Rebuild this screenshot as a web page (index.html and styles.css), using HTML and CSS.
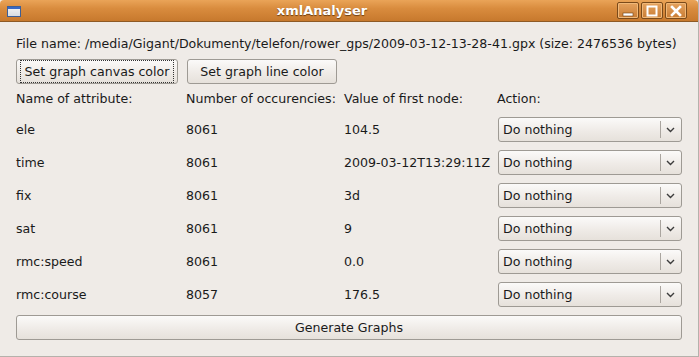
FILE: index.html
```html
<!DOCTYPE html>
<html lang="en">
<head>
  <meta charset="UTF-8">
  <title>xmlAnalyser</title>
  <link rel="stylesheet" href="styles.css">
</head>
<body>
  <div class="window">
    <div class="titlebar">
      <div class="win-icon"><div class="win-icon-bar"></div></div>
      <div class="title">xmlAnalyser</div>
      <div class="title-buttons">
        <div class="tbtn">
          <svg width="12" height="12" viewBox="0 0 12 12"><rect x="1" y="8" width="10" height="3" fill="#fff" stroke="#6b3f12" stroke-width="0.6"/></svg>
        </div>
        <div class="tbtn">
          <svg width="12" height="12" viewBox="0 0 12 12"><rect x="1.5" y="1.5" width="9" height="9" fill="none" stroke="#fff" stroke-width="2"/></svg>
        </div>
        <div class="tbtn">
          <svg width="12" height="12" viewBox="0 0 12 12"><path d="M2 2 L10 10 M10 2 L2 10" stroke="#fff" stroke-width="2.6" stroke-linecap="square"/></svg>
        </div>
      </div>
    </div>

    <div class="content">
      <p class="file-name">File name: /media/Gigant/Dokumenty/telefon/rower_gps/2009-03-12-13-28-41.gpx (size: 2476536 bytes)</p>

      <div class="color-buttons">
        <button class="btn focused canvas-btn"><span>Set graph canvas color</span></button>
        <button class="btn line-btn"><span>Set graph line color</span></button>
      </div>

      <div class="attr-table">
        <div class="head">Name of attribute:</div>
        <div class="head">Number of occurencies:</div>
        <div class="head">Value of first node:</div>
        <div class="head">Action:</div>

        <div class="cell">ele</div>
        <div class="cell">8061</div>
        <div class="cell">104.5</div>
        <div class="combo"><span>Do nothing</span><i class="sep"></i><svg class="arrow" width="9" height="6" viewBox="0 0 9 6"><path d="M1 1 L4.5 4.5 L8 1" fill="none" stroke="#3c3c3c" stroke-width="1.4"/></svg></div>

        <div class="cell">time</div>
        <div class="cell">8061</div>
        <div class="cell">2009-03-12T13:29:11Z</div>
        <div class="combo"><span>Do nothing</span><i class="sep"></i><svg class="arrow" width="9" height="6" viewBox="0 0 9 6"><path d="M1 1 L4.5 4.5 L8 1" fill="none" stroke="#3c3c3c" stroke-width="1.4"/></svg></div>

        <div class="cell">fix</div>
        <div class="cell">8061</div>
        <div class="cell">3d</div>
        <div class="combo"><span>Do nothing</span><i class="sep"></i><svg class="arrow" width="9" height="6" viewBox="0 0 9 6"><path d="M1 1 L4.5 4.5 L8 1" fill="none" stroke="#3c3c3c" stroke-width="1.4"/></svg></div>

        <div class="cell">sat</div>
        <div class="cell">8061</div>
        <div class="cell">9</div>
        <div class="combo"><span>Do nothing</span><i class="sep"></i><svg class="arrow" width="9" height="6" viewBox="0 0 9 6"><path d="M1 1 L4.5 4.5 L8 1" fill="none" stroke="#3c3c3c" stroke-width="1.4"/></svg></div>

        <div class="cell">rmc:speed</div>
        <div class="cell">8061</div>
        <div class="cell">0.0</div>
        <div class="combo"><span>Do nothing</span><i class="sep"></i><svg class="arrow" width="9" height="6" viewBox="0 0 9 6"><path d="M1 1 L4.5 4.5 L8 1" fill="none" stroke="#3c3c3c" stroke-width="1.4"/></svg></div>

        <div class="cell">rmc:course</div>
        <div class="cell">8057</div>
        <div class="cell">176.5</div>
        <div class="combo"><span>Do nothing</span><i class="sep"></i><svg class="arrow" width="9" height="6" viewBox="0 0 9 6"><path d="M1 1 L4.5 4.5 L8 1" fill="none" stroke="#3c3c3c" stroke-width="1.4"/></svg></div>
      </div>

      <button class="btn wide"><span>Generate Graphs</span></button>
    </div>
  </div>
</body>
</html>
```

FILE: styles.css
```css
* {
  margin: 0;
  padding: 0;
  box-sizing: border-box;
}

body {
  font-family: "DejaVu Sans", sans-serif;
  font-size: 12.6px;
  color: #1a1a1a;
  background-color: #efebe7;
}

.window {
  width: 699px;
  height: 357px;
  display: flex;
  flex-direction: column;
  background-color: #efebe7;
  border-right: 1px solid #b5b1ab;
  border-bottom: 1px solid #b5b1ab;
}

/* Title bar */
.titlebar {
  height: 22px;
  display: flex;
  align-items: center;
  padding: 0 7px;
  background: linear-gradient(#eaa458, #d98c3e 40%, #c7792d);
  border-bottom: 1px solid #8e5a25;
  border-radius: 4px 4px 0 0;
}

.win-icon {
  width: 14px;
  height: 11px;
  background: linear-gradient(#f4f4f4, #d8dde2);
  border: 1px solid #3e5f96;
  margin-top: 1px;
}

.win-icon-bar {
  height: 2px;
  background-color: #3868c4;
}

.title {
  flex: 1;
  text-align: center;
  color: #fff;
  font-weight: bold;
  font-size: 13px;
  text-shadow: 0 1px 1px #6b3d10;
  padding-left: 6px;
}

.title-buttons {
  display: flex;
  gap: 2px;
  margin-right: 4px;
}

.tbtn {
  width: 22px;
  height: 17px;
  border: 1px solid #7a4a1a;
  border-radius: 2px;
  background: linear-gradient(#e5a25e, #c97d34);
  box-shadow: inset 0 0 0 1px #f0b878;
  display: flex;
  justify-content: center;
  align-items: center;
}

/* Content */
.content {
  padding: 14px 16px 0 16px;
  display: flex;
  flex-direction: column;
}

.file-name {
  line-height: 16px;
  height: 16px;
  white-space: nowrap;
}

.color-buttons {
  display: flex;
  gap: 9px;
  margin-top: 7px;
}

.btn {
  height: 25px;
  padding: 0 10px;
  font-family: "DejaVu Sans", sans-serif;
  font-size: 12.6px;
  color: #1a1a1a;
  border: 1px solid #9e9a94;
  border-radius: 3px;
  background: linear-gradient(#fbfaf9, #efebe7 55%, #e6e1db);
}

.canvas-btn {
  width: 162px;
  padding: 0 3px;
}

.line-btn {
  width: 150px;
}

.btn.focused span {
  display: block;
  padding: 3px 0;
  border: 1px dotted #333;
}

.attr-table {
  display: grid;
  grid-template-columns: 170px 158px 153px 185px;
  grid-template-rows: 22px repeat(6, 33px);
  margin-top: 7px;
  align-items: center;
}

.head,
.cell {
  line-height: 16px;
  white-space: nowrap;
}

.head {
  align-self: start;
}

.combo {
  height: 25px;
  margin-left: 1px;
  display: flex;
  align-items: center;
  padding-left: 4px;
  border: 1px solid #9e9a94;
  border-radius: 3px;
  background: linear-gradient(#fbfaf9, #efebe7 55%, #e6e1db);
}

.combo span {
  flex: 1;
}

.combo .sep {
  width: 1px;
  height: 17px;
  background-color: #aaa59f;
}

.combo .arrow {
  margin: 1px 6px 0 5px;
}

.btn.wide {
  width: 666px;
  margin-top: 4px;
}
```
